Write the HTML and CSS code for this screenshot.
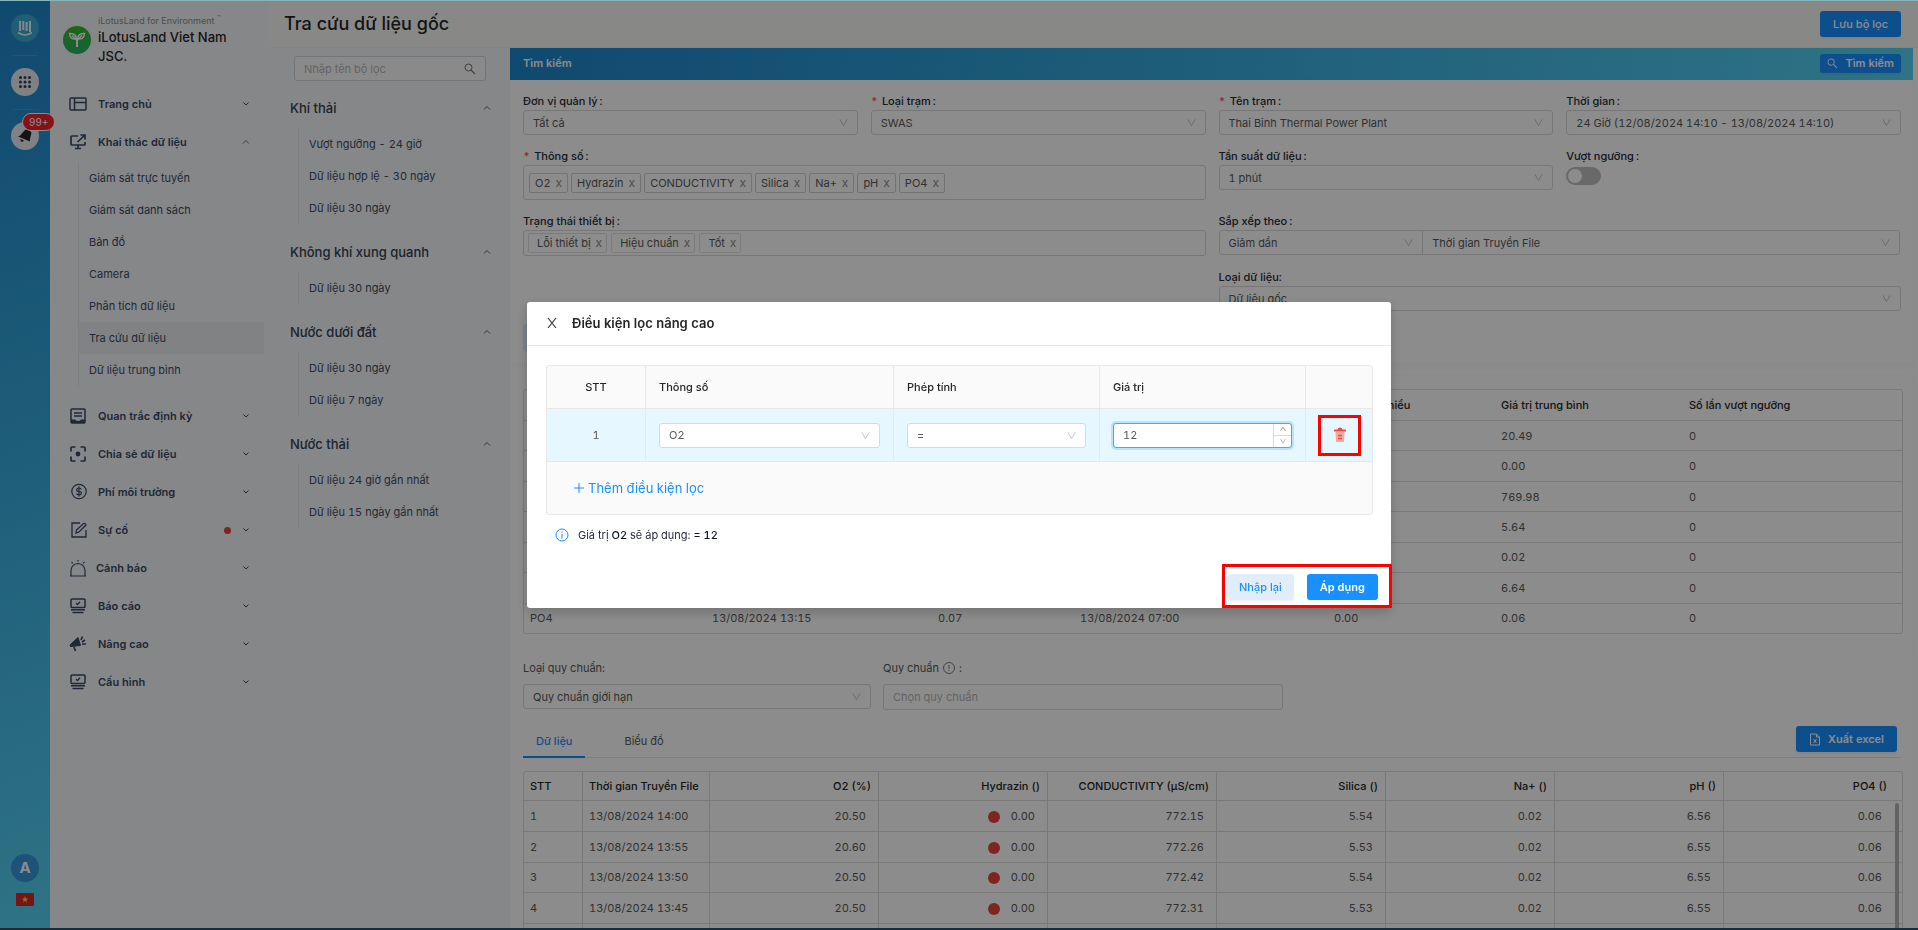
FILE: index.html
```html
<!DOCTYPE html>
<html lang="vi">
<head>
    <meta charset="UTF-8">
    <meta name="viewport" content="width=device-width, initial-scale=1.0">
    <title>Tra cứu dữ liệu gốc</title>
    <link rel="stylesheet" href="styles.css">
</head>
<body>
    <svg class="sprite" aria-hidden="true">
        <symbol id="down" viewBox="0 0 10 10"><path d="M1 1.500 5 8.500 9 1.500" fill="none" stroke="currentColor"/></symbol>
        <symbol id="caret" viewBox="0 0 10 10"><path d="M2.500 3.500 5 6 7.500 3.500" fill="none" stroke="currentColor"/></symbol>
        <symbol id="caret-up" viewBox="0 0 10 10"><path d="M2 6.500 5 3.500 8 6.500" fill="none" stroke="currentColor" stroke-width=".8"/></symbol>
        <symbol id="search" viewBox="0 0 12 12"><circle cx="4.500" cy="4.500" r="3.500" fill="none" stroke="currentColor"/><path d="M7 7 11 11" stroke="currentColor" stroke-width="1.100"/></symbol>
        <symbol id="screen" viewBox="0 0 18 18"><rect x="2" y="2" width="14" height="8.500" rx="1" fill="none" stroke="currentColor" stroke-width="1.500"/><path d="M7 6.200 8.500 7.500 11 4.800" fill="none" stroke="currentColor" stroke-width="1.300"/><path d="M2 12.800H16M3.500 15.500H14.500" stroke="currentColor" stroke-width="1.500"/></symbol>
    </svg>

    <div class="app">
        <nav class="rail">
            <a class="rail-icon rail-logo" href="#" aria-label="iLotusLand">
                <svg width="16" height="18" viewBox="0 0 16 18" fill="none" stroke="#fff" stroke-width="2"><path d="M3 2V12M6.300 2V11M9.600 3V12M13 2V13"/><path d="M1 13.500Q8 18.500 15 13.500" stroke-width="1.600"/></svg>
            </a>
            <hr>
            <button class="rail-icon" aria-label="Ứng dụng">
                <svg width="14" height="14" viewBox="0 0 14 14" fill="#2d3f5c"><circle cx="2.500" cy="2.500" r="1.500"/><circle cx="7" cy="2.500" r="1.500"/><circle cx="11.500" cy="2.500" r="1.500"/><circle cx="2.500" cy="7" r="1.500"/><circle cx="7" cy="7" r="1.500"/><circle cx="11.500" cy="7" r="1.500"/><circle cx="2.500" cy="11.500" r="1.500"/><circle cx="7" cy="11.500" r="1.500"/><circle cx="11.500" cy="11.500" r="1.500"/></svg>
            </button>
            <hr>
            <button class="rail-icon" aria-label="Thông báo">
                <svg width="16" height="16" viewBox="0 0 16 16" fill="#262626"><path d="M7.500 2.500Q10 .5 12 2L14.500 4.500 13.500 9Q12.500 11 13 13.500L1 8.500Q3 8 4.200 6.200Z"/><path d="M3.500 11 7 12.500Q5.500 14.500 4.200 13.500Q3 12.500 3.500 11"/></svg>
                <span class="badge">99+</span>
            </button>
            <div class="rail-bottom">
                <span class="avatar">A</span>
                <svg width="18" height="13" viewBox="0 0 18 13"><rect width="18" height="13" rx="1" fill="#d8262c"/><path d="M9 3 9.900 5.400H12.400L10.400 7 11.100 9.500 9 8 6.900 9.500 7.600 7 5.600 5.400H8.100Z" fill="#f5d327"/></svg>
            </div>
        </nav>

        <aside class="sidebar">
            <div class="brand">
                <span class="brand-logo">
                    <svg width="18" height="18" viewBox="0 0 18 18" fill="none" stroke="#fff" stroke-width="1.400"><path d="M1.500 2.500Q8 2 8.500 8Q2 9 1.500 2.500ZM16.500 2.500Q10 2 9.500 8Q16 9 16.500 2.500ZM4 4.500 9 9.500 14 4.500"/><path d="M9 8V16" stroke-width="2"/></svg>
                </span>
                <div>
                    <div class="brand-sub">iLotusLand for Environment <sup>™</sup></div>
                    <div class="brand-name">iLotusLand Viet Nam JSC.</div>
                </div>
            </div>
            <ul class="menu">
                <li><a href="#"><svg class="mi" viewBox="0 0 18 18" fill="none" stroke="currentColor" stroke-width="1.500"><rect x="1" y="3" width="16" height="12" rx="1"/><path d="M5.500 3V15M5.500 7.500H17"/></svg>Trang chủ<svg class="arrow"><use href="#caret"/></svg></a></li>
                <li>
                    <a href="#"><svg class="mi" viewBox="0 0 18 18" fill="none" stroke="currentColor" stroke-width="1.700"><path d="M9 3H3Q2 3 2 4V11Q2 12 3 12H15Q16 12 16 11V9M8.500 9 16 2M11.500 2H16V6.500M9 12V16M6 15.500H12"/></svg>Khai thác dữ liệu<svg class="arrow"><use href="#caret-up"/></svg></a>
                    <ul class="submenu">
                        <li><a href="#">Giám sát trực tuyến</a></li>
                        <li><a href="#">Giám sát danh sách</a></li>
                        <li><a href="#">Bản đồ</a></li>
                        <li><a href="#">Camera</a></li>
                        <li><a href="#">Phân tích dữ liệu</a></li>
                        <li><a href="#" class="active">Tra cứu dữ liệu</a></li>
                        <li><a href="#">Dữ liệu trung bình</a></li>
                    </ul>
                </li>
                <li><a href="#"><svg class="mi" viewBox="0 0 18 18" fill="none" stroke="currentColor" stroke-width="1.500"><rect x="2" y="2" width="14" height="14" rx="1"/><path d="M5 6H13M5 9H13"/><path d="M2 12.500H6Q7 14 9 14T12 12.500H16V16H2Z" fill="currentColor" stroke="none"/></svg>Quan trắc định kỳ<svg class="arrow"><use href="#caret"/></svg></a></li>
                <li><a href="#"><svg class="mi" viewBox="0 0 18 18" fill="none" stroke="currentColor" stroke-width="1.700"><path d="M2 6.500V3Q2 2 3 2H6.500M11.500 2H15Q16 2 16 3V6.500M16 11.500V15Q16 16 15 16H11.500M6.500 16H3Q2 16 2 15V11.500"/><circle cx="9" cy="9" r="2.400" fill="currentColor" stroke="none"/></svg>Chia sẻ dữ liệu<svg class="arrow"><use href="#caret"/></svg></a></li>
                <li><a href="#"><svg class="mi" viewBox="0 0 18 18" fill="none" stroke="currentColor" stroke-width="1.200"><circle cx="10" cy="8.500" r="7.200"/><path d="M12.300 6.500Q12 5 10 5T7.700 6.700T10 8.500T12.300 10.400T10 12T7.700 10.500M10 3.500V13.500"/></svg>Phí môi trường<svg class="arrow"><use href="#caret"/></svg></a></li>
                <li><a href="#"><svg class="mi" viewBox="0 0 18 18" fill="none" stroke="currentColor" stroke-width="1.300"><path d="M11 2H3V16H17V9"/><path d="M7 12 7.500 9 14.500 2.500Q16 2 17 4L10 11Z"/></svg>Sự cố<i class="dot"></i><svg class="arrow"><use href="#caret"/></svg></a></li>
                <li><a href="#" class="alarm"><svg class="mi" viewBox="0 0 18 18" fill="none" stroke="currentColor" stroke-width="1.200"><path d="M2 17V11Q3 5 9 4.500Q15 5 16 11V17M1 17H17M9 1V2.500M2.500 3 3.800 4.300M15.500 3 14.200 4.300"/></svg>Cảnh báo<svg class="arrow"><use href="#caret"/></svg></a></li>
                <li><a href="#"><svg class="mi"><use href="#screen"/></svg>Báo cáo<svg class="arrow"><use href="#caret"/></svg></a></li>
                <li><a href="#"><svg class="mi" viewBox="0 0 18 18" fill="currentColor" stroke="currentColor"><path d="M1 10 9 2.500 11.500 10.500 1.500 11.500Z"/><path d="M5 12 6.500 16M12 5 13.500 1.500M13 7 16 5M13 9H17" fill="none" stroke-width="1.700"/></svg>Nâng cao<svg class="arrow"><use href="#caret"/></svg></a></li>
                <li><a href="#"><svg class="mi"><use href="#screen"/></svg>Cấu hình<svg class="arrow"><use href="#caret"/></svg></a></li>
            </ul>
        </aside>

        <div class="page">
            <header class="page-head">
                <h1>Tra cứu dữ liệu gốc</h1>
                <button class="btn">Lưu bộ lọc</button>
            </header>
            <div class="page-body">
                <aside class="filters">
                    <div class="search-box">
                        <input type="text" placeholder="Nhập tên bộ lọc" aria-label="Nhập tên bộ lọc">
                        <svg width="12" height="12"><use href="#search"/></svg>
                    </div>
                    <section>
                        <h2>Khí thải<svg class="arrow"><use href="#caret-up"/></svg></h2>
                        <ul>
                            <li><a href="#">Vượt ngưỡng - 24 giờ</a></li>
                            <li><a href="#">Dữ liệu hợp lệ - 30 ngày</a></li>
                            <li><a href="#">Dữ liệu 30 ngày</a></li>
                        </ul>
                    </section>
                    <section>
                        <h2>Không khí xung quanh<svg class="arrow"><use href="#caret-up"/></svg></h2>
                        <ul>
                            <li><a href="#">Dữ liệu 30 ngày</a></li>
                        </ul>
                    </section>
                    <section>
                        <h2>Nước dưới đất<svg class="arrow"><use href="#caret-up"/></svg></h2>
                        <ul>
                            <li><a href="#">Dữ liệu 30 ngày</a></li>
                            <li><a href="#">Dữ liệu 7 ngày</a></li>
                        </ul>
                    </section>
                    <section>
                        <h2>Nước thải<svg class="arrow"><use href="#caret-up"/></svg></h2>
                        <ul>
                            <li><a href="#">Dữ liệu 24 giờ gần nhất</a></li>
                            <li><a href="#">Dữ liệu 15 ngày gần nhất</a></li>
                        </ul>
                    </section>
                </aside>

                <main class="content">
                    <div class="bar">
                        <span>Tìm kiếm</span>
                        <button class="btn btn-small"><svg width="11" height="11"><use href="#search"/></svg>Tìm kiếm</button>
                    </div>
                    <form class="card form">
                        <div class="field">
                            <label for="unit" class="colon">Đơn vị quản lý</label>
                            <div class="select"><select id="unit"><option>Tất cả</option></select><svg><use href="#down"/></svg></div>
                        </div>
                        <div class="field">
                            <label for="type" class="required colon">Loại trạm</label>
                            <div class="select"><select id="type"><option>SWAS</option></select><svg><use href="#down"/></svg></div>
                        </div>
                        <div class="field">
                            <label for="station" class="required colon">Tên trạm</label>
                            <div class="select"><select id="station"><option>Thai Binh Thermal Power Plant</option></select><svg><use href="#down"/></svg></div>
                        </div>
                        <div class="field">
                            <label for="time" class="colon">Thời gian</label>
                            <div class="select"><select id="time"><option>24 Giờ (12/08/2024 14:10 - 13/08/2024 14:10)</option></select><svg><use href="#down"/></svg></div>
                        </div>
                        <div class="field wide">
                            <span class="label required colon">Thông số</span>
                            <div class="tags tags-tall">
                                <span class="tag">O2<button type="button">x</button></span>
                                <span class="tag">Hydrazin<button type="button">x</button></span>
                                <span class="tag">CONDUCTIVITY<button type="button">x</button></span>
                                <span class="tag">Silica<button type="button">x</button></span>
                                <span class="tag">Na+<button type="button">x</button></span>
                                <span class="tag">pH<button type="button">x</button></span>
                                <span class="tag">PO4<button type="button">x</button></span>
                            </div>
                        </div>
                        <div class="field">
                            <label for="freq" class="colon">Tần suất dữ liệu</label>
                            <div class="select"><select id="freq"><option>1 phút</option></select><svg><use href="#down"/></svg></div>
                        </div>
                        <div class="field">
                            <label for="over" class="colon">Vượt ngưỡng</label>
                            <input type="checkbox" id="over" class="switch">
                        </div>
                        <div class="field wide">
                            <span class="label colon">Trạng thái thiết bị</span>
                            <div class="tags tags-soft">
                                <span class="tag">Lỗi thiết bị<button type="button">x</button></span>
                                <span class="tag">Hiệu chuẩn<button type="button">x</button></span>
                                <span class="tag">Tốt<button type="button">x</button></span>
                            </div>
                        </div>
                        <div class="field wide">
                            <label for="sort" class="colon">Sắp xếp theo</label>
                            <div class="joined">
                                <div class="select"><select id="sort"><option>Giảm dần</option></select><svg><use href="#down"/></svg></div>
                                <div class="select"><select aria-label="Sắp xếp theo cột"><option>Thời gian Truyền File</option></select><svg><use href="#down"/></svg></div>
                            </div>
                        </div>
                        <div class="field wide right">
                            <label for="kind">Loại dữ liệu:</label>
                            <div class="select"><select id="kind"><option>Dữ liệu gốc</option></select><svg><use href="#down"/></svg></div>
                        </div>
                        <div class="field wide"><button type="button" class="btn btn-light advanced">Lọc nâng cao</button></div>
                    </form>

                    <section class="card stats">
                        <table class="grid">
                            <colgroup><col class="w-name"><col class="w-time1"><col class="w-max"><col class="w-time2"><col class="w-min"><col class="w-avg"><col class="w-over"></colgroup>
                            <thead>
                                <tr><th>Thông số</th><th>Thời gian tối đa</th><th>Giá trị tối đa</th><th>Thời gian tối thiểu</th><th>Giá trị tối thiểu</th><th>Giá trị trung bình</th><th>Số lần vượt ngưỡng</th></tr>
                            </thead>
                            <tbody>
                                <tr><td>O2</td><td>13/08/2024 13:15</td><td>20.60</td><td>13/08/2024 07:00</td><td>0.00</td><td>20.49</td><td>0</td></tr>
                                <tr><td>Hydrazin</td><td>13/08/2024 13:15</td><td>0.00</td><td>13/08/2024 07:00</td><td>0.00</td><td>0.00</td><td>0</td></tr>
                                <tr><td>CONDUCTIVITY</td><td>13/08/2024 13:15</td><td>772.42</td><td>13/08/2024 07:00</td><td>0.00</td><td>769.98</td><td>0</td></tr>
                                <tr><td>Silica</td><td>13/08/2024 13:15</td><td>5.70</td><td>13/08/2024 07:00</td><td>0.00</td><td>5.64</td><td>0</td></tr>
                                <tr><td>Na+</td><td>13/08/2024 13:15</td><td>0.02</td><td>13/08/2024 07:00</td><td>0.00</td><td>0.02</td><td>0</td></tr>
                                <tr><td>pH</td><td>13/08/2024 13:15</td><td>6.70</td><td>13/08/2024 07:00</td><td>0.00</td><td>6.64</td><td>0</td></tr>
                                <tr><td>PO4</td><td>13/08/2024 13:15</td><td>0.07</td><td>13/08/2024 07:00</td><td>0.00</td><td>0.06</td><td>0</td></tr>
                            </tbody>
                        </table>
                    </section>

                    <section class="card data">
                        <div class="standards">
                            <div class="standard">
                                <label for="std-type">Loại quy chuẩn:</label>
                                <div class="select"><select id="std-type"><option>Quy chuẩn giới hạn</option></select><svg><use href="#down"/></svg></div>
                            </div>
                            <div class="standard std-input">
                                <label for="std">Quy chuẩn <svg width="12" height="12" viewBox="0 0 12 12" fill="none" stroke="currentColor" stroke-width=".8"><circle cx="6" cy="6" r="5.500"/><path d="M6 3V7M6 8V9"/></svg> :</label>
                                <input type="text" id="std" placeholder="Chọn quy chuẩn">
                            </div>
                        </div>
                        <div class="tabs">
                            <button class="tab active">Dữ liệu</button>
                            <button class="tab">Biểu đồ</button>
                            <button class="btn export"><svg width="12" height="13" viewBox="0 0 12 13" fill="none" stroke="currentColor"><path d="M1.500 1H7.500L10.500 4V12H1.500ZM7.500 1V4H10.500M4.500 6 7.500 10M7.500 6 4.500 10"/></svg>Xuất excel</button>
                        </div>
                        <div class="table-wrap">
                            <table class="grid grid-lines">
                                <colgroup><col class="w-stt"><col class="w-file"><col class="w-val"><col class="w-val"><col class="w-val"><col class="w-val"><col class="w-val"><col class="w-val"><col class="w-last"></colgroup>
                                <thead>
                                    <tr><th>STT</th><th>Thời gian Truyền File</th><th>O2 (%)</th><th>Hydrazin ()</th><th>CONDUCTIVITY (µS/cm)</th><th>Silica ()</th><th>Na+ ()</th><th>pH ()</th><th>PO4 ()</th></tr>
                                </thead>
                                <tbody>
                                    <tr><td>1</td><td>13/08/2024 14:00</td><td>20.50</td><td><i class="status"></i>0.00</td><td>772.15</td><td>5.54</td><td>0.02</td><td>6.56</td><td>0.06</td></tr>
                                    <tr><td>2</td><td>13/08/2024 13:55</td><td>20.60</td><td><i class="status"></i>0.00</td><td>772.26</td><td>5.53</td><td>0.02</td><td>6.55</td><td>0.06</td></tr>
                                    <tr><td>3</td><td>13/08/2024 13:50</td><td>20.50</td><td><i class="status"></i>0.00</td><td>772.42</td><td>5.54</td><td>0.02</td><td>6.55</td><td>0.06</td></tr>
                                    <tr><td>4</td><td>13/08/2024 13:45</td><td>20.50</td><td><i class="status"></i>0.00</td><td>772.31</td><td>5.53</td><td>0.02</td><td>6.55</td><td>0.06</td></tr>
                                    <tr class="cut"><td></td><td></td><td></td><td></td><td></td><td></td><td></td><td></td><td></td></tr>
                                </tbody>
                            </table>
                            <span class="thumb"></span>
                        </div>
                    </section>
                </main>
            </div>
        </div>
    </div>

    <div class="mask">
        <div class="modal" role="dialog" aria-labelledby="modal-title">
            <div class="modal-head">
                <button class="close" aria-label="Đóng"><svg width="10" height="10" viewBox="0 0 10 10" stroke="currentColor" stroke-width="1.200"><path d="M1 0 9 10M9 0 1 10"/></svg></button>
                <h2 id="modal-title">Điều kiện lọc nâng cao</h2>
            </div>
            <div class="modal-body">
                <table class="conditions">
                    <colgroup><col class="c-stt"><col class="c-param"><col class="c-op"><col class="c-op"><col class="c-del"></colgroup>
                    <thead>
                        <tr><th>STT</th><th>Thông số</th><th>Phép tính</th><th>Giá trị</th><th></th></tr>
                    </thead>
                    <tbody>
                        <tr>
                            <td>1</td>
                            <td><div class="select"><select aria-label="Thông số"><option>O2</option></select><svg><use href="#down"/></svg></div></td>
                            <td><div class="select"><select aria-label="Phép tính"><option>=</option></select><svg><use href="#down"/></svg></div></td>
                            <td>
                                <div class="number">
                                    <input type="text" value="12" aria-label="Giá trị">
                                    <span class="steps">
                                        <button aria-label="Tăng"><svg viewBox="0 0 10 10" fill="none" stroke="currentColor" stroke-width="1.500"><path d="M1 8 5 2 9 8"/></svg></button>
                                        <button aria-label="Giảm"><svg><use href="#down"/></svg></button>
                                    </span>
                                </div>
                            </td>
                            <td>
                                <button class="delete" aria-label="Xóa"><svg width="12" height="16" viewBox="0 0 12 16"><path d="M1.500 5H10.500L10 15H2Z" fill="#f5a9a3"/><path d="M0 3.500Q0 2.500 1 2.500H3.500Q4 .5 6 .5T8.500 2.500H11Q12 2.500 12 3.500V4.500H0Z" fill="#f0493e"/><path d="M4 8.500H8M4 11.500H8" stroke="#f0493e" stroke-width="1.300"/></svg></button>
                            </td>
                        </tr>
                    </tbody>
                    <tfoot>
                        <tr><td colspan="5"><button class="add"><svg width="10" height="10" viewBox="0 0 10 10" stroke="currentColor"><path d="M5 0V10M0 5H10"/></svg>Thêm điều kiện lọc</button></td></tr>
                    </tfoot>
                </table>
                <p class="note"><svg width="14" height="14" viewBox="0 0 14 14" fill="none" stroke="#1890ff"><circle cx="7" cy="7" r="6"/><path d="M7 6V10.500M7 3.500V4.700"/></svg><span>Giá trị <b>O2</b> sẽ áp dụng: <b>= 12</b></span></p>
            </div>
            <div class="modal-foot">
                <button class="btn btn-light">Nhập lại</button>
                <button class="btn btn-bold">Áp dụng</button>
            </div>
        </div>
    </div>
</body>
</html>
```
FILE: styles.css
```css
* {
    box-sizing: border-box;
}
body {
    margin: 0;
    font-family: Inter, "Noto Sans", sans-serif;
    font-size: 11px;
    font-feature-settings: "tnum";
    line-height: 18px;
    color: #595959;
    background: #fff;
}
body::before,
body::after {
    content: "";
    position: fixed;
    left: 0;
    right: 0;
    top: 0;
    height: 1px;
    background: #86b5bb;
    z-index: 20;
}
body::after {
    top: auto;
    bottom: 0;
    height: 2px;
    background: #1b2c38;
}
ul {
    list-style: none;
    margin: 0;
    padding: 0;
}
a {
    color: inherit;
    text-decoration: none;
}
button, input, select {
    font: inherit;
    color: inherit;
}
select {
    font-feature-settings: "tnum";
}
button {
    border: none;
    padding: 0;
    background: none;
    cursor: pointer;
}
h1, h2, p {
    margin: 0;
}
.sprite {
    display: none;
}
.app {
    display: flex;
    height: 100vh;
    overflow: hidden;
}

/* left rail */
.rail {
    flex: none;
    width: 50px;
    padding: 14px 0 24px;
    display: flex;
    flex-direction: column;
    align-items: center;
    background: linear-gradient(160deg, #1d86cb, #56d2f3);
}
.rail hr {
    width: 25px;
    margin: 13px 0 12px;
    border: none;
    border-top: 1px solid #4298cb;
}
.rail-icon {
    position: relative;
    flex: none;
    width: 28px;
    height: 28px;
    border-radius: 50%;
    background: #e8ebf2;
    display: flex;
    align-items: center;
    justify-content: center;
}
.rail-logo {
    background: #3da9d3;
}
.rail-logo svg {
    opacity: 0.9;
}
.badge {
    position: absolute;
    top: -9px;
    left: 11px;
    padding: 0 6px;
    border: 1px solid #fff;
    border-radius: 9px;
    background: #f5222d;
    color: #fff;
    font-size: 10px;
    line-height: 16px;
}
.rail-bottom {
    margin-top: auto;
    display: flex;
    flex-direction: column;
    align-items: center;
    gap: 11px;
}
.avatar {
    width: 28px;
    height: 28px;
    border-radius: 50%;
    background: #3595dc;
    color: #fff;
    font-size: 15px;
    font-weight: 700;
    line-height: 28px;
    text-align: center;
}

/* menu */
.sidebar {
    flex: none;
    width: 220px;
    background: #f4f6f8;
    color: #3a4a66;
}
.brand {
    display: flex;
    align-items: center;
    gap: 7px;
    height: 85px;
    padding: 0 30px 5px 13px;
}
.brand-logo {
    flex: none;
    width: 28px;
    height: 28px;
    border-radius: 50%;
    background: linear-gradient(#3fb52d, #22b866);
    display: flex;
    align-items: center;
    justify-content: center;
}
.brand-sub {
    font-size: 9px;
    line-height: 14px;
    color: #8c8c8c;
    white-space: nowrap;
}
.brand-sub sup {
    font-size: 6px;
    line-height: 0;
}
.brand-name {
    font-size: 13px;
    font-weight: 500;
    line-height: 19px;
    color: #262626;
}
.menu > li > a {
    display: flex;
    align-items: center;
    height: 38px;
    padding: 0 19px;
    font-weight: 600;
}
.mi {
    width: 18px;
    height: 18px;
    margin-right: 11px;
}
.alarm .mi {
    margin-right: 9px;
}
.arrow {
    width: 10px;
    height: 10px;
    margin-left: auto;
}
.dot {
    width: 7px;
    height: 7px;
    margin-left: auto;
    border-radius: 50%;
    background: #e8443a;
}
.dot + .arrow {
    margin-left: 10px;
}
.submenu {
    margin: 1px 6px 11px 28px;
    border-left: 1px solid #e3e5e8;
}
.submenu a {
    display: block;
    padding-left: 10px;
    line-height: 32px;
}
.submenu .active {
    background: #ebedef;
}

/* page */
.page {
    flex: 1;
    min-width: 0;
    display: flex;
    flex-direction: column;
}
.page-head {
    flex: none;
    height: 48px;
    padding: 0 17px 0 14px;
    display: flex;
    align-items: center;
    justify-content: space-between;
    background: #f7faf6;
    border-bottom: 1px solid #eef0f0;
}
.page-head h1 {
    font-size: 18px;
    font-weight: 500;
    color: #262626;
}
.btn {
    height: 26px;
    padding: 0 13px;
    border-radius: 3px;
    background: #1890ff;
    color: #fff;
    font-weight: 500;
    display: inline-flex;
    align-items: center;
    box-shadow: 0 2px 2px rgba(0, 0, 0, 0.05);
}
.btn-small {
    height: 19px;
    padding: 0 7px;
    gap: 7px;
    font-weight: 600;
}
.btn-light {
    padding: 0 12px;
    background: #e1edfb;
    color: #1890ff;
}
.btn-bold {
    font-weight: 600;
}
.page-body {
    flex: 1;
    min-height: 0;
    display: flex;
}
.filters {
    flex: none;
    width: 240px;
    padding: 8px 20px 0;
    background: #f4f6f8;
    color: #3f4d66;
}
.search-box {
    display: flex;
    align-items: center;
    height: 25px;
    margin: 0 4px 7px;
    padding-right: 9px;
    border: 1px solid #d0d3d6;
    border-radius: 3px;
    background: #fcfcfc;
    color: #737373;
}
.search-box input {
    flex: 1;
    min-width: 0;
    border: none;
    outline: none;
    padding: 0 9px;
    background: none;
}
input::placeholder {
    color: #b5b5b5;
    opacity: 1;
}
.filters section {
    margin-bottom: 8px;
}
.filters h2 {
    display: flex;
    align-items: center;
    height: 40px;
    margin-right: -2px;
    font-size: 13px;
    font-weight: 500;
    color: #334155;
}
.filters ul {
    margin-left: 8px;
    border-left: 1px solid #e3e5e8;
}
.filters li {
    padding-left: 10px;
    line-height: 32px;
}
.content {
    flex: 1;
    min-width: 0;
    margin-right: 5px;
}
.bar {
    height: 32px;
    padding: 0 12px 2px 13px;
    display: flex;
    align-items: center;
    justify-content: space-between;
    background: linear-gradient(100deg, #1d86cb, #56d2f3);
    color: #fff;
    font-weight: 600;
}
.card {
    padding: 13px 12px 13px 13px;
    background: #fff;
    box-shadow: 0 2px 6px rgba(0, 0, 0, 0.03);
}
.form {
    display: grid;
    grid-template-columns: repeat(4, 1fr);
    gap: 13px;
}
.wide {
    grid-column: span 2;
}
.right {
    grid-column: 3 / 5;
}
.field label,
.field .label {
    display: block;
    line-height: 17px;
    font-weight: 500;
    color: #262c3a;
}
.required::before {
    content: "*";
    margin-right: 4px;
    color: #ff4d4f;
}
.colon::after {
    content: ":";
    margin-left: 2px;
}
.advanced {
    display: flex;
}
.select {
    position: relative;
    width: 100%;
}
.select select {
    display: block;
    width: 100%;
    height: 25px;
    padding: 0 24px 0 9px;
    border: 1px solid #d9d9d9;
    border-radius: 3px;
    background: #fff;
    appearance: none;
}
.select svg {
    position: absolute;
    right: 10px;
    top: 8px;
    width: 9px;
    height: 9px;
    color: #bfbfbf;
    pointer-events: none;
}
.tags {
    display: flex;
    align-items: center;
    gap: 3px;
    height: 26px;
    padding: 0 4px;
    border: 1px solid #d9d9d9;
    border-radius: 3px;
}
.tags-tall {
    height: 35px;
    padding: 0 5px;
}
.tag {
    display: flex;
    align-items: center;
    height: 20px;
    padding: 0 5px;
    border: 1px solid #d0d0d0;
    border-radius: 2px;
}
.tag button {
    margin-left: 5px;
    color: #8c8c8c;
    font-size: 12px;
}
.tags-soft {
    gap: 4px;
}
.tags-soft .tag {
    padding: 0 4px 0 8px;
    border-color: #e0e0e0;
}
.switch {
    appearance: none;
    display: block;
    width: 35px;
    height: 18px;
    margin: 2px 0 0;
    border-radius: 9px;
    background: #bfbfbf;
}
.switch::before {
    content: "";
    display: block;
    width: 14px;
    height: 14px;
    margin: 2px;
    border-radius: 50%;
    background: #fff;
}
.joined {
    display: flex;
}
.joined .select:first-child {
    width: 30%;
}
.joined .select:last-child {
    width: 70%;
    margin-left: -1px;
}
.joined .select:first-child select {
    border-radius: 3px 0 0 3px;
}
.joined .select:last-child select {
    border-radius: 0 3px 3px 0;
}

/* tables */
.stats {
    margin-top: 13px;
}
.grid {
    width: 100%;
    table-layout: fixed;
    border: 1px solid #dcdcdc;
    border-radius: 3px;
    border-spacing: 0;
}
.grid th,
.grid td {
    padding: 5px 6px;
    border-bottom: 1px solid #dcdcdc;
    text-align: left;
    white-space: nowrap;
}
.grid th {
    font-weight: 500;
    color: #262626;
}
.grid tr:last-child td {
    border-bottom: none;
}
.stats .grid {
    height: 245px;
}
.stats th {
    height: 31px;
}
.w-name { width: 182px; }
.w-time1 { width: 226px; }
.w-max { width: 142px; }
.w-time2 { width: 254px; }
.w-min { width: 167px; }
.w-avg { width: 188px; }
.w-over { width: 219px; }
.standards {
    display: flex;
    gap: 12px;
}
.standard {
    width: 348px;
}
.std-input {
    width: 400px;
}
.standard label {
    display: flex;
    align-items: center;
    gap: 4px;
    height: 16px;
    margin-bottom: 8px;
}
.standard input {
    width: 100%;
    height: 26px;
    padding: 0 9px;
    border: 1px solid #d9d9d9;
    border-radius: 3px;
}
.tabs {
    display: flex;
    align-items: flex-end;
    margin-top: 15px;
    border-bottom: 1px solid #e4e4e4;
}
.tab {
    height: 33px;
    margin: 0 26px -1px 0;
    padding: 0 13px;
    border-bottom: 2px solid transparent;
}
.tab.active {
    border-color: #1890ff;
    color: #1890ff;
    font-weight: 500;
}
.export {
    margin: 0 4px 5px auto;
    gap: 7px;
    font-weight: 600;
}
.table-wrap {
    position: relative;
    margin-top: 13px;
}
.grid-lines {
    height: 184px;
}
.grid-lines th,
.grid-lines td {
    border-right: 1px solid #dcdcdc;
}
.grid-lines th:nth-child(n+3) {
    padding-right: 7px;
    text-align: right;
}
.grid-lines td:nth-child(n+3) {
    padding-right: 12px;
    text-align: right;
}
.grid-lines th:last-child {
    padding-right: 15px;
    border-right: none;
}
.grid-lines td:last-child {
    padding-right: 20px;
    border-right: none;
}
.w-stt { width: 59px; }
.w-file { width: 127px; }
.w-val { width: 169px; }
.w-last { width: 178px; }
.status {
    display: inline-block;
    width: 12px;
    height: 12px;
    margin-right: 11px;
    border-radius: 50%;
    background: #e8443a;
    vertical-align: -3px;
}
.cut td {
    height: 30px;
}
.thumb {
    position: absolute;
    top: 32px;
    right: 2px;
    bottom: 0;
    width: 4px;
    border-radius: 2px;
    background: #b5b5b5;
}

/* modal */
.mask {
    position: fixed;
    inset: 0;
    z-index: 10;
    display: flex;
    align-items: center;
    justify-content: center;
    padding-bottom: 20px;
    background: rgba(0, 0, 0, 0.45);
}
.modal {
    width: 864px;
    max-width: 100%;
    border-radius: 3px;
    background: #fff;
    box-shadow: 0 4px 12px rgba(0, 0, 0, 0.2);
}
.modal-head {
    display: flex;
    align-items: center;
    gap: 15px;
    height: 44px;
    padding: 0 20px 2px;
    border-bottom: 1px solid #e8e8e8;
}
.modal-head h2 {
    font-size: 13px;
    font-weight: 600;
    color: #262626;
}
.close {
    display: flex;
    color: #404040;
}
.modal-body {
    padding: 19px 19px 0;
}
.conditions {
    width: 100%;
    table-layout: fixed;
    border: 1px solid #e8e8e8;
    border-radius: 3px;
    border-spacing: 0;
    background: #fafafa;
}
.conditions th,
.conditions td {
    padding: 0 13px;
    border-right: 1px solid #e8e8e8;
    text-align: left;
}
.conditions th {
    height: 43px;
    border-bottom: 1px solid #e8e8e8;
    font-weight: 500;
    color: #262626;
}
.conditions tbody td {
    height: 53px;
    border-bottom: 1px solid #e8e8e8;
    background: #e6f7ff;
}
.conditions th:first-child,
.conditions tbody td:first-child {
    text-align: center;
}
.conditions th:last-child,
.conditions td:last-child {
    border-right: none;
}
.conditions tfoot td {
    height: 52px;
    padding: 0 27px;
}
.c-stt { width: 99px; }
.c-param { width: 248px; }
.c-op { width: 206px; }
.c-del { width: 66px; }
.number {
    display: flex;
    height: 25px;
    border: 1px solid #40a9ff;
    border-radius: 3px;
    background: #fff;
    box-shadow: 0 0 0 2px rgba(24, 144, 255, 0.2);
}
.number input {
    flex: 1;
    min-width: 0;
    padding: 0 9px;
    border: none;
    outline: none;
    background: none;
}
.steps {
    display: flex;
    flex-direction: column;
    width: 18px;
    border-left: 1px solid #d9d9d9;
    color: #8c8c8c;
}
.steps button {
    flex: 1;
    display: flex;
    align-items: center;
    justify-content: center;
}
.steps button + button {
    border-top: 1px solid #d9d9d9;
}
.steps svg {
    width: 6px;
    height: 6px;
}
.delete {
    display: flex;
    align-items: center;
    justify-content: center;
    width: 43px;
    height: 41px;
    margin: 0 -1px;
    border: 3px solid #f00;
}
.add {
    display: flex;
    align-items: center;
    gap: 4px;
    font-size: 13px;
    color: #1890ff;
}
.note {
    display: flex;
    align-items: center;
    gap: 9px;
    margin-top: 11px;
    padding-left: 9px;
    color: #262c3a;
}
.note b {
    font-weight: 500;
    color: #0f1726;
}
.modal-foot {
    display: flex;
    gap: 13px;
    width: 170px;
    margin: 20px -1px 0 auto;
    padding: 7px 2px 5px;
    border: 3px solid #f00;
}
```
